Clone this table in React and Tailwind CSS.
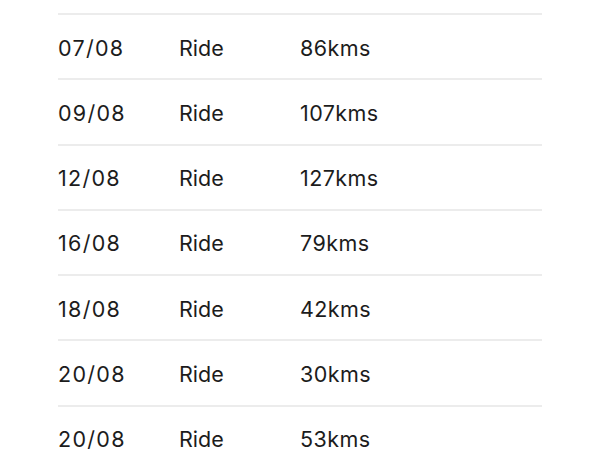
import React from "react";

const rows = [
  ["07/08", "Ride", "86kms"],
  ["09/08", "Ride", "107kms"],
  ["12/08", "Ride", "127kms"],
  ["16/08", "Ride", "79kms"],
  ["18/08", "Ride", "42kms"],
  ["20/08", "Ride", "30kms"],
  ["20/08", "Ride", "53kms"],
];

export default function App() {
  return (
    <div className="w-[600px] h-[450px] overflow-hidden bg-white pt-[13px] pl-[58px]" style={{ fontFamily: "Inter, 'Noto Sans', sans-serif" }}>
      <div className="w-[484px]">
        {rows.map((r, i) => (
          <div key={i} className="h-[65.25px] border-t-2 border-[#ececec] flex items-center pt-[2px] text-[21.5px] text-[#1c1c1c]">
            <div className="w-[121px] tracking-[0.06em]">{r[0]}</div>
            <div className="w-[121px]">{r[1]}</div>
            <div className="tracking-[0.02em]">{r[2]}</div>
          </div>
        ))}
      </div>
    </div>
  );
}
